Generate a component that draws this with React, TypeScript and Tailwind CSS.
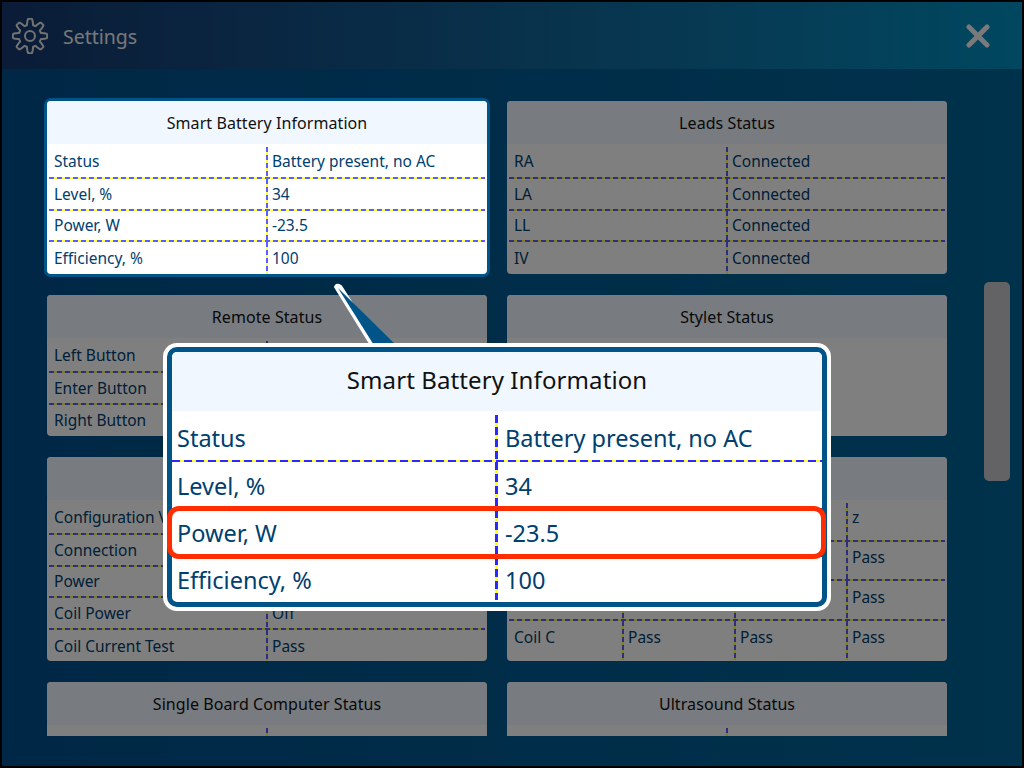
const FONT = "font-['Noto_Sans',sans-serif]";
const H_DASH = "bg-[repeating-linear-gradient(90deg,#5c5cff_0_5px,#ffff44_5px_8px)]";
const V_DASH = "bg-[repeating-linear-gradient(180deg,#5c5cff_0_5px,#ffff44_5px_8px)]";
const POPUP_H_DASH = "bg-[repeating-linear-gradient(90deg,#2a2aff_0_8px,#ffff22_8px_12px)]";
const POPUP_V_DASH = "bg-[repeating-linear-gradient(180deg,#2a2aff_0_8px,#ffff22_8px_12px)]";

type CardData = {
  title: string;
  rows: string[][];
  height: string;
  rowHeights: string[];
  widths?: string[];
  textPad?: string;
};

const twoCol = ["w-[219px]", "flex-1"];
const fourCol = ["w-[115px]", "w-[112px]", "w-[112px]", "flex-1"];

const cards: CardData[] = [
  {
    title: "Smart Battery Information",
    height: "h-[173px]",
    rowHeights: ["h-[33px]", "h-[29.5px]", "h-[29.5px]", "h-[32px]"],
    rows: [
      ["Status", "Battery present, no AC"],
      ["Level, %", "34"],
      ["Power, W", "-23.5"],
      ["Efficiency, %", "100"],
    ],
  },
  {
    title: "Leads Status",
    height: "h-[173px]",
    rowHeights: ["h-[33px]", "h-[29.5px]", "h-[29.5px]", "h-[32px]"],
    rows: [
      ["RA", "Connected"],
      ["LA", "Connected"],
      ["LL", "Connected"],
      ["IV", "Connected"],
    ],
  },
  {
    title: "Remote Status",
    height: "h-[141px]",
    rowHeights: ["h-[33px]", "h-[29.5px]", "h-[31.5px]"],
    rows: [
      ["Left Button", ""],
      ["Enter Button", ""],
      ["Right Button", ""],
    ],
  },
  {
    title: "Stylet Status",
    height: "h-[141px]",
    rowHeights: [],
    rows: [],
  },
  {
    title: "",
    height: "h-[204px]",
    rowHeights: ["h-[33px]", "h-[29.5px]", "h-[29.5px]", "h-[29.5px]", "h-[32.5px]"],
    rows: [
      ["Configuration V", ""],
      ["Connection", ""],
      ["Power", ""],
      ["Coil Power", "Off"],
      ["Coil Current Test", "Pass"],
    ],
  },
  {
    title: "",
    height: "h-[204px]",
    widths: fourCol,
    textPad: "pb-[5px]",
    rowHeights: ["h-[40px]", "h-[37px]", "h-[38px]", "h-[39px]"],
    rows: [
      ["", "", "", "z"],
      ["", "", "", "Pass"],
      ["", "", "", "Pass"],
      ["Coil C", "Pass", "Pass", "Pass"],
    ],
  },
  {
    title: "Single Board Computer Status",
    height: "h-[173px]",
    rowHeights: ["h-[33px]", "h-[29.5px]"],
    rows: [["", ""], ["", ""]],
  },
  {
    title: "Ultrasound Status",
    height: "h-[173px]",
    rowHeights: ["h-[33px]", "h-[29.5px]"],
    rows: [["", ""], ["", ""]],
  },
];

function Card({ card, active }: { card: CardData; active?: boolean }) {
  const widths = card.widths ?? twoCol;
  return (
    <div
      className={`${card.height} flex flex-col overflow-hidden rounded-[4px] bg-white ${
        active ? "relative z-20 ring-3 ring-[#005488]" : ""
      }`}
    >
      <div className="flex h-[43px] shrink-0 items-center justify-center bg-[#f0f7ff] text-[16px] tracking-[0.08px] text-[#111111]">
        {card.title}
      </div>
      {card.rows.map((row, i) => (
        <div key={i}>
          {i > 0 && <div className={`mx-[2px] h-[2px] ${H_DASH}`} />}
          <div className={`flex ${card.rowHeights[i]}`}>
            {row.map((text, j) => (
              <div key={j} className={`flex items-stretch ${widths[j]}`}>
                {j > 0 && <div className={`w-[2px] shrink-0 ${V_DASH} ${i === 0 ? "mt-[3px]" : ""}`} />}
                <div
                  className={`flex items-center whitespace-nowrap text-[15.5px] text-[#004070] ${
                    card.textPad ?? (i === 0 ? "pt-[3px]" : "pt-[1px]")
                  } ${j > 0 ? "pl-[4px]" : "pl-[7px]"}`}
                >
                  {text}
                </div>
              </div>
            ))}
          </div>
        </div>
      ))}
    </div>
  );
}

function GearIcon() {
  // eight rounded teeth round a small circle
  const pts: string[] = [];
  for (let i = 0; i <= 240; i++) {
    const t = (i / 240) * Math.PI * 2;
    const wave = Math.max(-1, Math.min(1, Math.cos(8 * t) * 1.7));
    const r = 14.2 + 3 * wave;
    pts.push(`${(18 + r * Math.sin(t)).toFixed(2)},${(18 - r * Math.cos(t)).toFixed(2)}`);
  }
  return (
    <svg width="36" height="36" viewBox="0 0 36 36" fill="none" stroke="#e4e4e4" strokeWidth="2" strokeLinejoin="round">
      <polygon points={pts.join(" ")} />
      <circle cx="18" cy="18" r="5" />
    </svg>
  );
}

const popupRows = [
  ["Status", "Battery present, no AC"],
  ["Level, %", "34"],
  ["Power, W", "-23.5"],
  ["Efficiency, %", "100"],
];
const popupHeights = ["h-[49px]", "h-[45.5px]", "h-[45.5px]", "h-[45px]"];

function Popup() {
  return (
    <div className="absolute left-[163px] top-[343px] z-30 h-[268px] w-[668px] rounded-[14px] bg-white p-[4px]">
      <div className="h-full overflow-hidden rounded-[10px] border-[5px] border-[#005488] bg-white">
        <div className="flex h-[59px] items-center justify-center bg-[#f0f7ff] pb-[4px] text-[24px] tracking-[0.1px] text-[#111111]">
          Smart Battery Information
        </div>
        {popupRows.map((row, i) => {
          const pad = i === 0 ? "pt-[7px]" : "pt-[3px]";
          return (
            <div key={row[0]}>
              {i > 0 && <div className={`h-[2px] ${POPUP_H_DASH}`} />}
              <div className={`flex ${popupHeights[i]}`}>
                <div className={`flex w-[323px] items-center pl-[5px] text-[23.5px] text-[#004070] ${pad}`}>{row[0]}</div>
                <div className={`w-[3px] shrink-0 ${POPUP_V_DASH} ${i === 0 ? "mt-[4px]" : ""} ${i === 3 ? "mb-[2px]" : ""}`} />
                <div className={`flex items-center pl-[7px] text-[23.5px] text-[#004070] ${pad}`}>{row[1]}</div>
              </div>
            </div>
          );
        })}
      </div>
      <div className="absolute left-[4px] top-[163px] h-[53px] w-[659px] rounded-[12px] border-[5px] border-[#ff2d00]" />
    </div>
  );
}

export default function App() {
  return (
    <div className={`relative flex h-[768px] w-[1024px] flex-col overflow-hidden bg-black p-[2px] ${FONT}`}>
      <header className="flex h-[67px] shrink-0 items-center bg-gradient-to-r from-[#14386f] to-[#008fc0] pl-[10px] pr-[32px]">
        <GearIcon />
        <span className="ml-[15px] pt-[3px] text-[19.5px] text-[#f0f0f0]">Settings</span>
        <svg className="ml-auto" width="24" height="24" viewBox="0 0 24 24" fill="none" stroke="#f4f4f4" strokeWidth="5" strokeLinecap="round">
          <path d="M3 3 L21 21 M21 3 L3 21" />
        </svg>
      </header>

      <main className="flex flex-1 bg-gradient-to-r from-[#00508c] to-[#006498]">
        <div className="ml-[41px] mt-[28px] h-[639px] w-[908px] overflow-hidden p-[4px]">
          <div className="grid grid-cols-[440px_440px] gap-x-[20px] gap-y-[21px]">
            {cards.map((card, i) => (
              <Card key={i} card={card} active={i === 0} />
            ))}
          </div>
        </div>
        <div className="ml-[33px] mt-[213px] h-[199px] w-[26px] rounded-[5px] bg-[#c6c6cc]" />
      </main>

      <div className="absolute inset-0 z-10 bg-black/50" />

      <svg className="absolute left-0 top-0 z-30" width="1024" height="768" fill="none">
        <path d="M335 287 Q336 283 341 286 L378 344 L374 350 Z" fill="#ffffff" stroke="#ffffff" strokeWidth="2" strokeLinejoin="round" />
        <path d="M338 288 L399 348 L377 350 Z" fill="#005488" />
      </svg>
      <Popup />
    </div>
  );
}
